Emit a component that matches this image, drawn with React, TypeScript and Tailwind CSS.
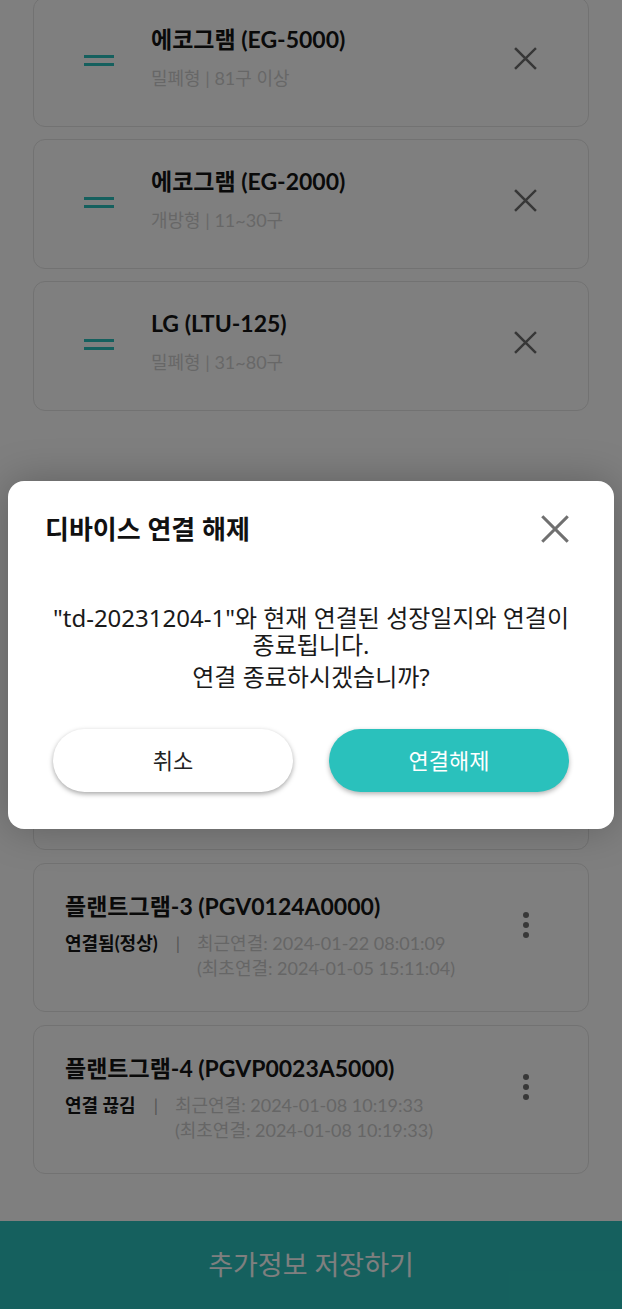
import React from "react";

const LATO = { fontFamily: 'Lato, "Noto Sans CJK KR", sans-serif' };
const CJK = { fontFamily: '"Noto Sans", "Noto Sans CJK KR", sans-serif' };

function Handle() {
  return (
    <div className="flex flex-col gap-[5px] shrink-0 mt-[-3px]">
      <div className="h-[3px] w-[30px] bg-[#2ac1bc]" />
      <div className="h-[3px] w-[30px] bg-[#2ac1bc]" />
    </div>
  );
}

function XIcon({ size, color, stroke }: { size: number; color: string; stroke: number }) {
  return (
    <svg width={size} height={size} viewBox="0 0 24 24" fill="none">
      <path d="M2 2 L22 22 M22 2 L2 22" stroke={color} strokeWidth={stroke} strokeLinecap="square" />
    </svg>
  );
}

function SensorCard({ title, sub }: { title: string; sub: string }) {
  return (
    <div className="h-[130px] shrink-0 rounded-[12px] border border-[#e4e4e4] bg-white flex items-center pl-[50px] pr-[50px]">
      <Handle />
      <div className="ml-[37px] flex-1 pb-[10px]">
        <div className="text-[23px] leading-[30px] font-bold text-[#141414]">{title}</div>
        <div className="mt-[12px] text-[18px] leading-[24px] text-[#cfcfcf]">{sub}</div>
      </div>
      <div className="pb-[8px] mr-[1px]">
        <XIcon size={23} color="#6e6e6e" stroke={2.6} />
      </div>
    </div>
  );
}

function Kebab() {
  return (
    <div className="flex flex-col items-center gap-[4px] w-[24px]">
      <div className="h-[6px] w-[6px] rounded-full bg-[#707070]" />
      <div className="h-[6px] w-[6px] rounded-full bg-[#707070]" />
      <div className="h-[6px] w-[6px] rounded-full bg-[#707070]" />
    </div>
  );
}

function DeviceCard({
  title,
  status,
  recent,
  first,
}: {
  title?: string;
  status?: string;
  recent?: string;
  first?: string;
}) {
  if (!title) {
    return <div className="h-[149px] shrink-0 rounded-[12px] border border-[#e4e4e4] bg-white" />;
  }
  return (
    <div className="h-[149px] shrink-0 rounded-[12px] border border-[#e4e4e4] bg-white flex pl-[31px] pr-[50px]">
      <div className="flex-1 pt-[27px]">
        <div className="text-[23px] leading-[30px] font-bold text-[#141414] whitespace-nowrap">{title}</div>
        <div className="mt-[10px] flex items-start">
          <span className="text-[18px] leading-[25px] font-bold text-[#141414] whitespace-nowrap">{status}</span>
          <span className="ml-[18px] mr-[17px] text-[17px] leading-[25px] text-[#aaaaaa]">|</span>
          <div className="text-[18px] leading-[25px] text-[#cccccc] whitespace-nowrap">
            <div>최근연결: {recent}</div>
            <div>(최초연결: {first})</div>
          </div>
        </div>
      </div>
      <div className="pt-[48px]">
        <Kebab />
      </div>
    </div>
  );
}

export default function App() {
  return (
    <div className="relative h-[1309px] w-full overflow-hidden bg-white flex flex-col" style={LATO}>
      <div className="flex-1 px-[33px] flex flex-col">
        <div className="mt-[-3px] flex flex-col gap-[12px]">
          <SensorCard title="에코그램 (EG-5000)" sub="밀폐형 | 81구 이상" />
          <SensorCard title="에코그램 (EG-2000)" sub="개방형 | 11~30구" />
          <SensorCard title="LG (LTU-125)" sub="밀폐형 | 31~80구" />
        </div>
        <div className="h-[290px]" />
        <div className="flex flex-col gap-[13px]">
          <DeviceCard />
          <DeviceCard
            title="플랜트그램-3 (PGV0124A0000)"
            status="연결됨(정상)"
            recent="2024-01-22 08:01:09"
            first="2024-01-05 15:11:04"
          />
          <DeviceCard
            title="플랜트그램-4 (PGVP0023A5000)"
            status="연결 끊김"
            recent="2024-01-08 10:19:33"
            first="2024-01-08 10:19:33"
          />
        </div>
      </div>
      <div className="h-[88px] shrink-0 bg-[#2ac1bc] flex items-center justify-center" style={CJK}>
        <span className="text-[27px] text-white">추가정보 저장하기</span>
      </div>

      <div className="absolute inset-0 bg-black/50 flex items-center justify-center px-[8px]">
        <div
          className="w-full rounded-[16px] bg-white pt-[33px] pb-[37px] px-[37px] shadow-[0_0_40px_rgba(0,0,0,0.25)]"
          style={CJK}
        >
          <div className="flex items-center justify-between h-[30px]">
            <div className="text-[26px] leading-[30px] font-bold text-[#111]">디바이스 연결 해제</div>
            <div className="mr-[8px]">
              <XIcon size={28} color="#707070" stroke={2.6} />
            </div>
          </div>
          <div className="mt-[60px] text-center text-[24px] leading-[27px] text-[#1a1a1a]">
            <div className="whitespace-nowrap">"td-20231204-1"와 현재 연결된 성장일지와 연결이</div>
            <div>종료됩니다.</div>
            <div className="mt-[5px]">연결 종료하시겠습니까?</div>
          </div>
          <div className="mt-[39px] flex justify-center gap-[36px]">
            <button className="w-[240px] h-[63px] rounded-full bg-white text-[22px] text-[#222] shadow-[0_2px_5px_rgba(0,0,0,0.35)]">
              취소
            </button>
            <button className="w-[240px] h-[63px] rounded-full bg-[#2ac1bc] text-[22px] text-white shadow-[0_2px_5px_rgba(0,0,0,0.3)]">
              연결해제
            </button>
          </div>
        </div>
      </div>
    </div>
  );
}
